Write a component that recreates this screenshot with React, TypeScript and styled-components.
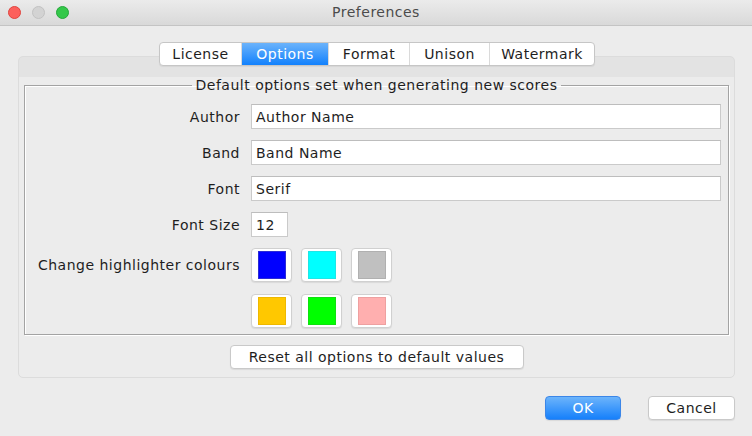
import React from "react";
import styled, { createGlobalStyle } from "styled-components";

const Global = createGlobalStyle`
  html, body { margin: 0; padding: 0; background: #ececec; }
  body { font-family: "DejaVu Sans", "Noto Sans", sans-serif; font-size: 14px; letter-spacing: 0.5px; color: #1e1e1e; }
  * { box-sizing: border-box; }
`;

const Window = styled.div`
  width: 752px;
  height: 436px;
  display: flex;
  flex-direction: column;
  background: #ececec;
  overflow: hidden;
`;

const TitleBar = styled.div`
  height: 26px;
  flex: none;
  display: grid;
  grid-template-columns: 1fr auto 1fr;
  align-items: center;
  background: linear-gradient(#ebebeb, #d9d9d9);
  border-bottom: 1px solid #c4c4c4;
  padding: 0 8px;
`;

const Lights = styled.div`
  display: flex;
  gap: 11px;
  align-items: center;
  padding-bottom: 1px;
`;

const Light = styled.span<{ $c: string; $b: string }>`
  width: 13px;
  height: 13px;
  border-radius: 50%;
  background: ${(p) => p.$c};
  border: 1px solid ${(p) => p.$b};
`;

const Title = styled.div`
  font-size: 14px;
  color: #4b4b4b;
  padding-bottom: 1px;
`;

const Content = styled.div`
  flex: 1;
  display: flex;
  flex-direction: column;
  padding: 16px 17px 0 18px;
`;

const TabBar = styled.div`
  align-self: center;
  display: flex;
  height: 24px;
  margin-bottom: -10px;
  margin-left: 1px;
  position: relative;
  z-index: 1;
  background: #fff;
  border: 1px solid #c6c6c6;
  border-radius: 4px;
  box-shadow: 0 1px 1px rgba(0, 0, 0, 0.06);
  overflow: hidden;
`;

const Tab = styled.div<{ $active?: boolean; $w: number }>`
  width: ${(p) => p.$w}px;
  display: flex;
  align-items: center;
  justify-content: center;
  color: ${(p) => (p.$active ? "#fff" : "#1e1e1e")};
  background: ${(p) => (p.$active ? "linear-gradient(#6bb3fb, #1281fd)" : "transparent")};
  & + & {
    border-left: 1px solid ${(p) => (p.$active ? "#3d8ff0" : "#dadada")};
  }
`;

const Panel = styled.div`
  width: 717px;
  height: 322px;
  border: 1px solid #dcdcdc;
  border-radius: 5px;
  background: linear-gradient(#e3e3e3 0, #e3e3e3 20px, #ececec 20px);
  display: flex;
  flex-direction: column;
  padding: 20px 5px 0 5px;
`;

const Group = styled.fieldset`
  margin: 0;
  padding: 10px 7px 6px 7px;
  border: 1px solid #a3a3a3;
  box-shadow: inset 1px 1px 0 #fff, 1px 1px 0 #fff;
  display: grid;
  grid-template-columns: 208px 1fr;
  column-gap: 11px;
  row-gap: 11px;
  align-items: center;
`;

const Legend = styled.legend`
  margin: 0 auto;
  padding: 0 4px;
  line-height: 17px;
  color: #1e1e1e;
`;

const Label = styled.div<{ $top?: boolean }>`
  text-align: right;
  white-space: nowrap;
  ${(p) => (p.$top ? "align-self: start; line-height: 34px;" : "")}
`;

const Field = styled.div<{ $w?: number }>`
  height: 25px;
  width: ${(p) => (p.$w ? `${p.$w}px` : "100%")};
  background: #fff;
  border: 1px solid #cacaca;
  border-top-color: #bdbdbd;
  display: flex;
  align-items: center;
  padding: 0 4px;
  color: #1e1e1e;
`;

const Swatches = styled.div`
  display: grid;
  grid-template-columns: repeat(3, 41px);
  column-gap: 9px;
  row-gap: 12px;
`;

const SwatchButton = styled.div`
  width: 41px;
  height: 34px;
  background: #fff;
  border: 1px solid #d0d0d0;
  border-radius: 4px;
  box-shadow: 0 1px 1px rgba(0, 0, 0, 0.08);
  display: flex;
  align-items: center;
  justify-content: center;
`;

const Swatch = styled.div<{ $c: string; $b: string }>`
  width: 28px;
  height: 28px;
  background: ${(p) => p.$c};
  border: 1px solid ${(p) => p.$b};
`;

const Button = styled.div<{ $w: number; $primary?: boolean }>`
  width: ${(p) => p.$w}px;
  height: 24px;
  display: flex;
  align-items: center;
  justify-content: center;
  border-radius: 4px;
  color: ${(p) => (p.$primary ? "#fff" : "#1e1e1e")};
  background: ${(p) => (p.$primary ? "linear-gradient(#6cb4fb, #1680fb)" : "#fff")};
  border: 1px solid ${(p) => (p.$primary ? "#3b86e8" : "#c9c9c9")};
  box-shadow: 0 1px 1px rgba(0, 0, 0, 0.08);
`;

const ResetRow = styled.div`
  display: flex;
  justify-content: center;
  margin-top: 10px;
`;

const Footer = styled.div`
  display: flex;
  justify-content: flex-end;
  gap: 27px;
  margin-top: 18px;
`;

const tabs: [string, number][] = [
  ["License", 81],
  ["Options", 87],
  ["Format", 81],
  ["Unison", 80],
  ["Watermark", 105],
];

const colours: [string, string][] = [
  ["#0000ff", "#2b2bd6"],
  ["#00ffff", "#1ee6e6"],
  ["#c0c0c0", "#b0b0b0"],
  ["#ffc800", "#eeb800"],
  ["#00ff00", "#10e010"],
  ["#ffafaf", "#eea0a0"],
];

export default function App() {
  return (
    <Window>
      <Global />
      <TitleBar>
        <Lights>
          <Light $c="#fc605c" $b="#e0443e" />
          <Light $c="#d3d3d3" $b="#c2c2c2" />
          <Light $c="#34c84a" $b="#25a73a" />
        </Lights>
        <Title>Preferences</Title>
        <div />
      </TitleBar>
      <Content>
        <TabBar>
          {tabs.map(([t, w]) => (
            <Tab key={t} $w={w} $active={t === "Options"}>
              {t}
            </Tab>
          ))}
        </TabBar>
        <Panel>
          <Group>
            <Legend>Default options set when generating new scores</Legend>
            <Label>Author</Label>
            <Field>Author Name</Field>
            <Label>Band</Label>
            <Field>Band Name</Field>
            <Label>Font</Label>
            <Field>Serif</Field>
            <Label>Font Size</Label>
            <Field $w={37}>12</Field>
            <Label $top>Change highlighter colours</Label>
            <Swatches>
              {colours.map(([c, b]) => (
                <SwatchButton key={c}>
                  <Swatch $c={c} $b={b} />
                </SwatchButton>
              ))}
            </Swatches>
          </Group>
          <ResetRow>
            <Button $w={294}>Reset all options to default values</Button>
          </ResetRow>
        </Panel>
        <Footer>
          <Button $w={76} $primary>
            OK
          </Button>
          <Button $w={87}>Cancel</Button>
        </Footer>
      </Content>
    </Window>
  );
}
